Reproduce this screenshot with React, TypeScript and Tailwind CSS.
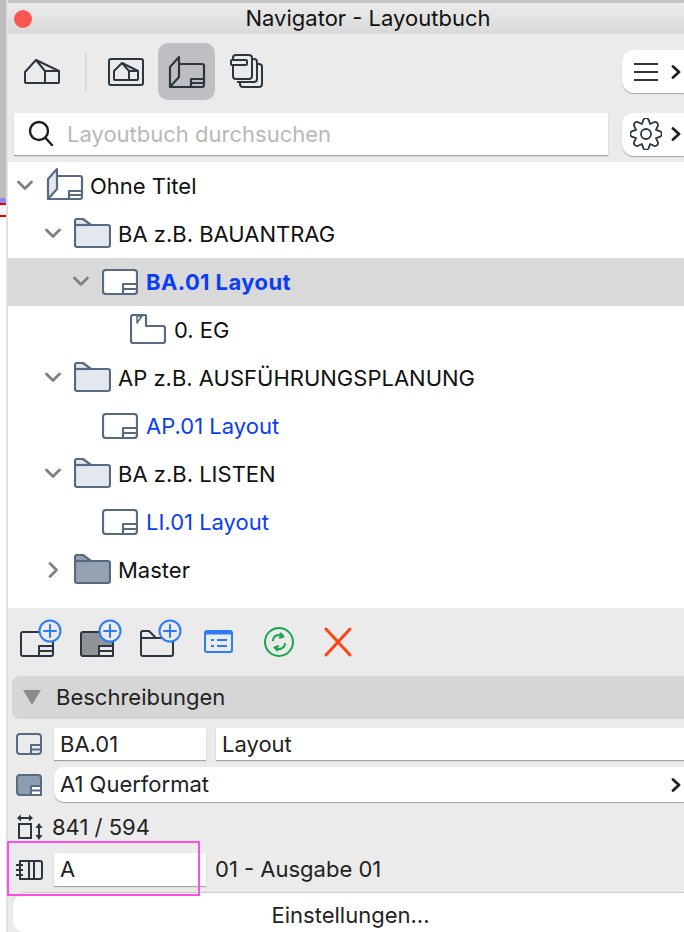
import type { ReactNode } from "react";

const S = "#2b3640";
const B = "#566b82";

// 8 tooth cog outline, same shape as the settings button in the picture
const gearPath = (() => {
  const p = (deg: number, r: number) => {
    const a = (deg * Math.PI) / 180;
    return `${(16 + r * Math.cos(a)).toFixed(2)} ${(16 + r * Math.sin(a)).toFixed(2)}`;
  };
  let d = "";
  for (let i = 0; i < 8; i++) {
    const c = i * 45;
    d += `${i === 0 ? "M" : "L"}${p(c - 22.5, 10.8)} L${p(c - 10, 14.6)} A3 3 0 0 1 ${p(c + 10, 14.6)} `;
  }
  return d + "Z";
})();

function Chevron({ open }: { open: boolean }) {
  return (
    <svg width="18" height="18" viewBox="0 0 18 18" fill="none" stroke="#808080" strokeWidth="2.8" strokeLinecap="round" strokeLinejoin="round">
      {open ? <path d="M2.5 5 9 11.5 15.5 5" /> : <path d="M6 2.5 12.5 9 6 15.5" />}
    </svg>
  );
}

function SmallChevron() {
  return (
    <svg width="10" height="14" viewBox="0 0 10 14" fill="none" stroke="#222" strokeWidth="2.8" strokeLinecap="round" strokeLinejoin="round">
      <path d="M2 1.5 8 7 2 12.5" />
    </svg>
  );
}

function BookIcon({ color = B, fill = "#e3e8ef", className = "" }: { color?: string; fill?: string; className?: string }) {
  return (
    <svg className={className} width="38" height="32" viewBox="0 0 38 32" fill="none" stroke={color} strokeWidth="2.2" strokeLinejoin="round">
      <path d="M2 11 11 1V21L2 31Z" fill={fill} />
      <path d="M11 8H34a2 2 0 0 1 2 2V29a2 2 0 0 1-2 2H2" />
      <path d="M23 31V23H36M23 27H36" />
    </svg>
  );
}

function FolderIcon({ dark }: { dark?: boolean }) {
  return (
    <svg className="mb-[2px]" width="37" height="31" viewBox="0 0 37 31" fill={dark ? "#94a2b2" : "#e3e8ef"} stroke={B} strokeWidth="2.2" strokeLinejoin="round">
      <path d="M1 3a2 2 0 0 1 2-2H9L17 7H34a2 2 0 0 1 2 2V27a2 2 0 0 1-2 2H3a2 2 0 0 1-2-2Z" />
      <path d="M1 7H17" fill="none" />
    </svg>
  );
}

function LayoutIcon() {
  return (
    <svg width="36" height="26" viewBox="0 0 36 26" fill="#fff" stroke={B} strokeWidth="2.2" strokeLinejoin="round">
      <rect x="1" y="1" width="34" height="24" rx="3" />
      <path d="M21 25V15H35M21 20H35" />
    </svg>
  );
}

function DrawingIcon() {
  return (
    <svg className="mb-[3px]" width="36" height="30" viewBox="0 0 36 30" fill="none" stroke={B} strokeWidth="2.2" strokeLinejoin="round">
      <path d="M3 1H15a1 1 0 0 1 1 1V12H33a2 2 0 0 1 2 2V27a2 2 0 0 1-2 2H3a2 2 0 0 1-2-2V3A2 2 0 0 1 3 1Z" />
      <path d="M7 9 12 2H7Z" fill="#e3e8ef" strokeWidth="1.5" />
    </svg>
  );
}

function HouseIcon() {
  return (
    <svg width="38" height="27" viewBox="0 0 38 27" fill="none" stroke={S} strokeWidth="2" strokeLinejoin="round">
      <path d="M2 14 13 2 22 13V25H3a1 1 0 0 1-1-1Z" />
      <path d="M13 2 36 13V24a1 1 0 0 1-1 1H22M22 13H36" />
    </svg>
  );
}

function ModelIcon() {
  return (
    <svg width="37" height="29" viewBox="0 0 37 29" fill="none" stroke={S} strokeWidth="2" strokeLinejoin="round">
      <rect x="2" y="2" width="34" height="26" rx="2" />
      <path d="M7 14 15 6 22 14V23H8a1 1 0 0 1-1-1Z" />
      <path d="M15 6 31 14V22a1 1 0 0 1-1 1H22M22 14H31" />
    </svg>
  );
}

function StackIcon() {
  return (
    <svg width="34" height="35" viewBox="0 0 34 35" fill="none" stroke={S} strokeWidth="2" strokeLinejoin="round">
      <path d="M3 6V4a3 3 0 0 1 3-3H19a3 3 0 0 1 3 3V22a3 3 0 0 1-3 3H6a3 3 0 0 1-3-3V11" />
      <rect x="1" y="6" width="16" height="5" rx="1" />
      <path d="M22 5h2a3 3 0 0 1 3 3V25a3 3 0 0 1-3 3H7" />
      <path d="M27 10h2a3 3 0 0 1 3 3V30a3 3 0 0 1-3 3H13a3 3 0 0 1-3-3V28" />
    </svg>
  );
}

function PlusBadge({ children }: { children: ReactNode }) {
  return (
    <div className="relative h-[38px] w-[42px]">
      {children}
      <svg className="absolute right-0 top-0" width="24" height="24" viewBox="0 0 24 24" fill="#ebebeb" stroke="#2e7bf6" strokeWidth="2" strokeLinecap="round">
        <circle cx="12" cy="12" r="10.5" />
        <path d="M12 6V18M6 12H18" />
      </svg>
    </div>
  );
}

function TreeRow({
  indent,
  chevron,
  icon,
  label,
  className = "text-[#111]",
  rowClass = "",
}: {
  indent: string;
  chevron?: "open" | "closed";
  icon: ReactNode;
  label: string;
  className?: string;
  rowClass?: string;
}) {
  return (
    <div className={`flex h-12 items-center ${indent} ${rowClass}`}>
      <div className="flex w-[30px] shrink-0 items-center">{chevron && <Chevron open={chevron === "open"} />}</div>
      <div className="flex w-[44px] shrink-0 items-center">{icon}</div>
      <span className={`text-[22px] leading-none ${className}`}>{label}</span>
    </div>
  );
}

export default function App() {
  return (
    <div className="flex h-[932px] w-[684px] overflow-hidden bg-white font-['Inter','Liberation_Sans',sans-serif]">
      {/* what shows of the window behind */}
      <div className="flex w-[8px] shrink-0 flex-col border-r-2 border-[#e0e0e0]">
        <div className="h-[198px] bg-[#bdbdbd]" />
        <div className="h-[5px] bg-[#8a8af5]" />
        <div className="h-[2px] bg-[#e60000]" />
        <div className="h-[10px] bg-[#f4f4f4]" />
        <div className="h-[2px] bg-[#e60000]" />
      </div>

      <div className="flex min-w-0 flex-1 flex-col bg-[#ebebeb]">
        <div className="h-[3px] bg-[#c4c4c4]" />
        <div className="relative flex h-[31px] items-center justify-center bg-[linear-gradient(#ebebeb,#d9d9d9)] pl-[44px] text-[22px] text-[#111]">
          <div className="absolute left-[6px] top-[7px] h-[18px] w-[18px] rounded-full bg-[#fc5753]" />
          Navigator - Layoutbuch
        </div>

        <div className="flex h-[78px] items-center pb-[3px] pl-[15px]">
          <HouseIcon />
          <div className="ml-[24px] mr-[20px] h-[40px] w-[2px] bg-[#dcdcdc]" />
          <ModelIcon />
          <div className="ml-[14px] flex h-[57px] w-[57px] items-center justify-center rounded-[10px] bg-[#bfbfc3]">
            <BookIcon color={S} fill="none" />
          </div>
          <div className="ml-[15px]">
            <StackIcon />
          </div>
          <div className="ml-auto flex h-[43px] w-[62px] items-center gap-[13px] rounded-l-[12px] bg-white pl-[12px] shadow-[0_1px_1px_rgba(0,0,0,0.3)]">
            <svg width="24" height="20" viewBox="0 0 24 20" stroke={S} strokeWidth="2">
              <path d="M0 2H24M0 10H24M0 18H24" />
            </svg>
            <SmallChevron />
          </div>
        </div>

        <div className="flex h-[44px] items-center pl-[6px]">
          <div className="flex h-[42px] w-[594px] items-center gap-[13px] bg-white pl-[14px] shadow-[0_1px_1px_rgba(0,0,0,0.3)]">
            <svg width="26" height="28" viewBox="0 0 26 28" fill="none" stroke="#1d1d1d" strokeWidth="2.4" strokeLinecap="round">
              <circle cx="11" cy="11" r="9" />
              <path d="M17.5 18 24 25" />
            </svg>
            <span className="text-[22px] text-[#b9b9b9]">Layoutbuch durchsuchen</span>
          </div>
          <div className="ml-auto flex h-[43px] w-[62px] items-center gap-[9px] rounded-l-[12px] bg-white pl-[8px] shadow-[0_1px_1px_rgba(0,0,0,0.3)]">
            <svg width="32" height="32" viewBox="0 0 32 32" fill="none" stroke={S} strokeWidth="1.8" strokeLinejoin="round">
              <path d={gearPath} />
              <circle cx="16" cy="16" r="5" />
            </svg>
            <SmallChevron />
          </div>
        </div>

        <div className="mt-[6px] flex h-[446px] flex-col bg-white">
          <TreeRow indent="pl-[8px]" chevron="open" icon={<BookIcon className="mb-[4px]" />} label="Ohne Titel" />
          <TreeRow indent="pl-[36px]" chevron="open" icon={<FolderIcon />} label="BA z.B. BAUANTRAG" />
          <TreeRow
            indent="pl-[64px]"
            chevron="open"
            icon={<LayoutIcon />}
            label="BA.01 Layout"
            className="font-bold tracking-[0.4px] text-[#0b3df5]"
            rowClass="bg-[#d9d9d9]"
          />
          <TreeRow indent="pl-[92px]" icon={<DrawingIcon />} label="0. EG" />
          <TreeRow indent="pl-[36px]" chevron="open" icon={<FolderIcon />} label="AP z.B. AUSFÜHRUNGSPLANUNG" />
          <TreeRow indent="pl-[64px]" icon={<LayoutIcon />} label="AP.01 Layout" className="text-[#0b3df5]" />
          <TreeRow indent="pl-[36px]" chevron="open" icon={<FolderIcon />} label="BA z.B. LISTEN" />
          <TreeRow indent="pl-[64px]" icon={<LayoutIcon />} label="LI.01 Layout" className="text-[#0b3df5]" />
          <TreeRow indent="pl-[36px]" chevron="closed" icon={<FolderIcon dark />} label="Master" />
        </div>

        <div className="flex h-[68px] items-start gap-[18px] pl-[12px] pt-[11px]">
          <PlusBadge>
            <svg className="absolute bottom-0 left-0" width="34" height="26" viewBox="0 0 34 26" fill="none" stroke={S} strokeWidth="2" strokeLinejoin="round">
              <rect x="1" y="1" width="32" height="24" rx="2" />
              <path d="M19 25V15H33M19 20H33" />
            </svg>
          </PlusBadge>
          <PlusBadge>
            <svg className="absolute bottom-0 left-0" width="34" height="26" viewBox="0 0 34 26" fill="#8e9396" stroke={S} strokeWidth="2" strokeLinejoin="round">
              <rect x="1" y="1" width="32" height="24" rx="2" />
              <path d="M19 25V15H33V25ZM19 20H33" fill="#ebebeb" />
            </svg>
          </PlusBadge>
          <PlusBadge>
            <svg className="absolute bottom-0 left-0" width="34" height="27" viewBox="0 0 34 27" fill="none" stroke={S} strokeWidth="2" strokeLinejoin="round">
              <path d="M1 3a2 2 0 0 1 2-2H9L16 8H33V24a2 2 0 0 1-2 2H3a2 2 0 0 1-2-2Z" />
              <path d="M1 8H16" />
            </svg>
          </PlusBadge>
          <svg className="ml-[4px] mt-[11px]" width="30" height="24" viewBox="0 0 30 24" fill="none" stroke="#2e7bf6" strokeWidth="2">
            <rect x="1" y="1" width="27" height="21" rx="2" />
            <path d="M1 3H28" strokeWidth="3" />
            <path d="M7 10H10M7 16H10M13 10H23M13 16H23" />
          </svg>
          <svg className="ml-[12px] mt-[8px]" width="30" height="30" viewBox="0 0 30 30" fill="none" stroke="#14a84a" strokeWidth="2" strokeLinejoin="round">
            <circle cx="15" cy="15" r="14" />
            <path d="M9 14a6 6 0 0 1 10-4.5M16 6l3.5 3.5L15 11" />
            <path d="M21 16a6 6 0 0 1-10 4.5M14 24l-3.5-3.5L15 19" />
          </svg>
          <svg className="ml-[12px] mt-[8px]" width="28" height="30" viewBox="0 0 28 30" fill="none" stroke="#ff4314" strokeWidth="3" strokeLinecap="round">
            <path d="M2 2 26 28M26 2 2 28" />
          </svg>
        </div>

        <div className="ml-[4px] flex h-[43px] items-center gap-[15px] rounded-l-[8px] bg-[#d6d6d6] pl-[11px]">
          <svg width="18" height="15" viewBox="0 0 18 15" fill="#8a8d90">
            <path d="M0 0H18L9 15Z" />
          </svg>
          <span className="text-[22px] text-[#222]">Beschreibungen</span>
        </div>

        <div className="mt-[9px] flex h-[32px] items-center pl-[8px]">
          <div className="flex w-[38px] shrink-0">
            <svg width="26" height="22" viewBox="0 0 26 22" fill="none" stroke={B} strokeWidth="2" strokeLinejoin="round">
              <rect x="1" y="1" width="24" height="20" rx="3" />
              <path d="M15 21V12H25M15 16.5H25" />
            </svg>
          </div>
          <div className="flex h-[32px] w-[152px] items-center bg-white pl-[6px] text-[22px] text-[#222] shadow-[0_1px_1px_rgba(0,0,0,0.3)]">BA.01</div>
          <div className="ml-[10px] flex h-[32px] flex-1 items-center bg-white pl-[6px] text-[22px] text-[#222] shadow-[0_1px_1px_rgba(0,0,0,0.3)]">Layout</div>
        </div>

        <div className="mt-[7px] flex h-[35px] items-center pl-[8px]">
          <div className="flex w-[38px] shrink-0">
            <svg width="26" height="22" viewBox="0 0 26 22" fill="#8c9db0" stroke={B} strokeWidth="2" strokeLinejoin="round">
              <rect x="1" y="1" width="24" height="20" rx="3" />
              <path d="M15 21V12H25V21Z" fill="#fff" />
              <path d="M15 16.5H25" />
            </svg>
          </div>
          <div className="flex h-[35px] flex-1 items-center justify-between rounded-l-[10px] bg-white pl-[6px] pr-[3px] text-[22px] text-[#222] shadow-[0_1px_1px_rgba(0,0,0,0.3)]">
            A1 Querformat
            <SmallChevron />
          </div>
        </div>

        <div className="mt-[8px] flex h-[34px] items-center pl-[9px]">
          <div className="flex w-[35px] shrink-0">
            <svg width="27" height="26" viewBox="0 0 27 26" fill="none" stroke={S} strokeWidth="2">
              <rect x="2" y="10" width="12" height="14" />
              <path d="M3 4H13" />
              <path d="M0 4 4 0.5V7.5ZM16 4 12 0.5V7.5Z" fill={S} stroke="none" />
              <path d="M22 12V23" />
              <path d="M22 9 18.5 14H25.5ZM22 26 18.5 21H25.5Z" fill={S} stroke="none" />
            </svg>
          </div>
          <span className="text-[22px] text-[#222]">841 / 594</span>
        </div>

        <div className="relative mt-[9px] flex h-[33px] items-center pl-[7px]">
          <div className="pointer-events-none absolute left-[-1px] top-[-12px] h-[55px] w-[193px] border-2 border-[#ff4de8]" />
          <div className="flex w-[39px] shrink-0">
            <svg width="28" height="20" viewBox="0 0 28 20" fill="none" stroke={S} strokeWidth="2" strokeLinejoin="round">
              <path d="M5 1H25a2 2 0 0 1 2 2V17a2 2 0 0 1-2 2H5Z" />
              <path d="M14 1V19M19 1V19" />
              <path d="M1 5H8M1 10H8M1 15H8" />
            </svg>
          </div>
          <div className="flex h-[33px] w-[152px] items-center bg-white pl-[6px] text-[22px] text-[#222] shadow-[0_1px_1px_rgba(0,0,0,0.3)]">A</div>
          <span className="ml-[9px] text-[22px] text-[#222]">01 - Ausgabe 01</span>
        </div>

        <div className="ml-[5px] mt-[7px] flex flex-1 justify-center rounded-l-[12px] bg-white pl-[4px] pt-[8px] text-[22px] leading-[28px] text-[#222] shadow-[0_-1px_1px_rgba(0,0,0,0.15)]">
          Einstellungen...
        </div>
      </div>
    </div>
  );
}
